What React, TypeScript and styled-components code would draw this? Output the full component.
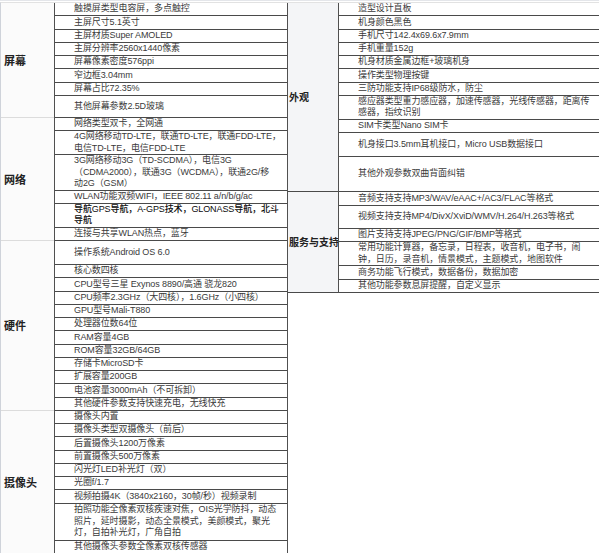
import * as React from "react";
import styled, { createGlobalStyle } from "styled-components";

type Spec = { text: string; h?: number; dark?: boolean };
type Group = { name: string; rows: Spec[] };

const leftGroups: Group[] = [
  {
    name: "屏幕",
    rows: [
      { text: "触摸屏类型电容屏，多点触控" },
      { text: "主屏尺寸5.1英寸" },
      { text: "主屏材质Super AMOLED" },
      { text: "主屏分辨率2560x1440像素" },
      { text: "屏幕像素密度576ppi" },
      { text: "窄边框3.04mm" },
      { text: "屏幕占比72.35%" },
      { text: "其他屏幕参数2.5D玻璃", h: 22 },
    ],
  },
  {
    name: "网络",
    rows: [
      { text: "网络类型双卡，全网通" },
      { text: "4G网络移动TD-LTE，联通TD-LTE，联通FDD-LTE，\n电信TD-LTE，电信FDD-LTE" },
      { text: "3G网络移动3G（TD-SCDMA），电信3G\n（CDMA2000），联通3G（WCDMA），联通2G/移\n动2G（GSM）" },
      { text: "WLAN功能双频WIFI，IEEE 802.11 a/n/b/g/ac" },
      { text: "导航GPS导航，A-GPS技术，GLONASS导航，北斗\n导航", dark: true },
      { text: "连接与共享WLAN热点，蓝牙" },
    ],
  },
  {
    name: "硬件",
    rows: [
      { text: "操作系统Android OS 6.0", h: 24 },
      { text: "核心数四核" },
      { text: "CPU型号三星 Exynos 8890/高通 骁龙820" },
      { text: "CPU频率2.3GHz（大四核），1.6GHz（小四核）" },
      { text: "GPU型号Mali-T880" },
      { text: "处理器位数64位" },
      { text: "RAM容量4GB" },
      { text: "ROM容量32GB/64GB" },
      { text: "存储卡MicroSD卡" },
      { text: "扩展容量200GB" },
      { text: "电池容量3000mAh（不可拆卸）" },
      { text: "其他硬件参数支持快速充电，无线快充" },
    ],
  },
  {
    name: "摄像头",
    rows: [
      { text: "摄像头内置" },
      { text: "摄像头类型双摄像头（前后）" },
      { text: "后置摄像头1200万像素" },
      { text: "前置摄像头500万像素" },
      { text: "闪光灯LED补光灯（双）" },
      { text: "光圈f/1.7" },
      { text: "视频拍摄4K（3840x2160，30帧/秒）视频录制" },
      { text: "拍照功能全像素双核疾速对焦，OIS光学防抖，动态\n照片，延时摄影，动态全景模式，美颜模式，聚光\n灯，自拍补光灯，广角自拍", h: 37 },
      { text: "其他摄像头参数全像素双核传感器" },
    ],
  },
];

const rightGroups: Group[] = [
  {
    name: "外观",
    rows: [
      { text: "造型设计直板" },
      { text: "机身颜色黑色" },
      { text: "手机尺寸142.4x69.6x7.9mm" },
      { text: "手机重量152g" },
      { text: "机身材质金属边框+玻璃机身" },
      { text: "操作类型物理按键" },
      { text: "三防功能支持IP68级防水，防尘" },
      { text: "感应器类型重力感应器，加速传感器，光线传感器，距离传\n感器，指纹识别" },
      { text: "SIM卡类型Nano SIM卡" },
      { text: "机身接口3.5mm耳机接口，Micro USB数据接口", h: 23.5 },
      { text: "其他外观参数双曲背面纠错", h: 35 },
    ],
  },
  {
    name: "服务与支持",
    rows: [
      { text: "音频支持支持MP3/WAV/eAAC+/AC3/FLAC等格式", h: 14.5 },
      { text: "视频支持支持MP4/DivX/XviD/WMV/H.264/H.263等格式", h: 23 },
      { text: "图片支持支持JPEG/PNG/GIF/BMP等格式" },
      { text: "常用功能计算器，备忘录，日程表，收音机，电子书，闹\n钟，日历，录音机，情景模式，主题模式，地图软件" },
      { text: "商务功能飞行模式，数据备份，数据加密" },
      { text: "其他功能参数息屏提醒，自定义显示" },
    ],
  },
];

const SpecTable: React.FC<{ groups: Group[]; side: "left" | "right" }> = ({ groups, side }) => (
  <Table $side={side}>
    {groups.map((g) => (
      <GroupRow key={g.name} $side={side}>
        <Category $side={side}>{g.name}</Category>
        <Values $side={side}>
          {g.rows.map((r) => (
            <Row key={r.text} $h={r.h} $dark={r.dark}>
              {r.text}
            </Row>
          ))}
        </Values>
      </GroupRow>
    ))}
  </Table>
);

const App: React.FC = () => (
  <>
    <GlobalStyle />
    <Page>
      <SpecTable groups={leftGroups} side="left" />
      <SpecTable groups={rightGroups} side="right" />
    </Page>
  </>
);

export default App;

/* Styles */
const GlobalStyle = createGlobalStyle`
  *, *::before, *::after {
    box-sizing: border-box;
  }
  body {
    margin: 0;
    background: #ffffff;
  }
`;

const Page = styled.div`
  display: flex;
  align-items: flex-start;
  width: 599px;
  height: 553px;
  padding-top: 2px;
  overflow: hidden;
  border-top: 1px solid #e4e6ea;
  font-family: "Liberation Sans", "Noto Sans CJK SC", sans-serif;
`;

const Table = styled.div<{ $side: "left" | "right" }>`
  display: flex;
  flex-direction: column;
  width: ${(p) => (p.$side === "left" ? "288px" : "auto")};
  flex: ${(p) => (p.$side === "left" ? "none" : "1")};
  border-top: 1px solid #e2e2e2;
  border-left: ${(p) => (p.$side === "left" ? "1px solid #cfd3da" : "none")};
  margin-top: -1px;
`;

const GroupRow = styled.div<{ $side: "left" | "right" }>`
  display: flex;
  align-items: stretch;
  border-bottom: 1px solid ${(p) => (p.$side === "left" ? "#dcdcdc" : "#4a4a4a")};
`;

const Category = styled.div<{ $side: "left" | "right" }>`
  display: flex;
  align-items: center;
  flex: none;
  width: ${(p) => (p.$side === "left" ? "53px" : "50px")};
  padding-left: ${(p) => (p.$side === "left" ? "3px" : "1px")};
  background: ${(p) => (p.$side === "left" ? "#fbfbfb" : "#f4f5f7")};
  font-family: "Noto Sans CJK SC", sans-serif;
  font-size: ${(p) => (p.$side === "left" ? "11px" : "10px")};
  font-weight: 700;
  color: #222222;
  white-space: nowrap;
`;

const Values = styled.div<{ $side: "left" | "right" }>`
  display: flex;
  flex-direction: column;
  flex: 1;
  min-width: 0;
  border-left: 1px solid #505050;
  border-right: ${(p) => (p.$side === "left" ? "1px solid #505050" : "none")};
  margin-bottom: -1px;
`;

const Row = styled.div<{ $h?: number; $dark?: boolean }>`
  display: flex;
  align-items: center;
  min-height: ${(p) => p.$h ?? 13.25}px;
  padding: 0 0 0 19px;
  border-bottom: 1px solid #4a4a4a;
  font-size: 9px;
  line-height: 11.5px;
  letter-spacing: -0.1px;
  color: ${(p) => (p.$dark ? "#0a0a0a" : "#3a3a3a")};
  font-weight: ${(p) => (p.$dark ? 500 : 400)};
  white-space: pre;
  overflow: hidden;
`;
